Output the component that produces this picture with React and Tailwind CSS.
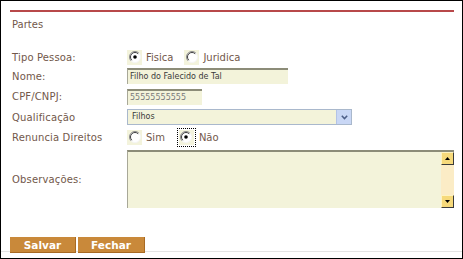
const LABEL = 'text-[#72584a]'

function Radio({ checked }) {
  return (
    <svg width="12" height="12" viewBox="0 0 12 12">
      <circle cx="6" cy="6" r="5.5" fill="#fff" />
      <path d="M2.1 9.9 A5.5 5.5 0 0 1 9.9 2.1" stroke="#8a8a8a" strokeWidth="1" fill="none" />
      <path d="M2.8 9.2 A4.5 4.5 0 0 1 9.2 2.8" stroke="#404040" strokeWidth="1" fill="none" />
      <path d="M9.9 2.1 A5.5 5.5 0 0 1 2.1 9.9" stroke="#f4f4f4" strokeWidth="1" fill="none" />
      {checked && <circle cx="6" cy="6" r="1.8" fill="#000" />}
    </svg>
  )
}

function RadioBox({ checked, focus }) {
  return (
    <div className={`w-[15px] h-[15px] flex items-center justify-center bg-[#f3f3dc] ${focus ? 'outline outline-1 outline-dotted outline-black outline-offset-1' : ''}`}>
      <Radio checked={checked} />
    </div>
  )
}

function Row({ label, h, children, extra = '' }) {
  return (
    <div className={`flex items-center ${h} ${extra}`}>
      <div className={`w-[115px] tracking-[0.15px] ${LABEL}`}>{label}</div>
      <div className="flex items-center">{children}</div>
    </div>
  )
}

function Field({ w, value, muted }) {
  return (
    <div className={`${w} h-[16px] bg-[#f3f3da] border-t-2 border-l border-t-[#8c8c78] border-l-[#a8a898] flex items-center pl-[2px] text-[8px] ${muted ? 'text-[#7a7a7a]' : 'text-[#3a3a3a]'}`}>
      {value}
    </div>
  )
}

function ScrollBtn({ up }) {
  return (
    <div className="w-[13px] h-[13px] bg-[#f6d97a] border-r border-b border-r-[#3a3a3a] border-b-[#3a3a3a] border-t border-l border-t-[#fff3c0] border-l-[#fff3c0] flex items-center justify-center">
      <svg width="5" height="3" viewBox="0 0 5 3">
        {up ? <path d="M0 3 L2.5 0 L5 3 Z" fill="#000" /> : <path d="M0 0 L2.5 3 L5 0 Z" fill="#000" />}
      </svg>
    </div>
  )
}

export default function App() {
  return (
    <div className="w-[463px] h-[259px] bg-white border border-black flex flex-col font-['DejaVu_Sans',sans-serif] text-[10px]">
      <div className="ml-[9px] mt-[9px] w-[444px] h-[2px] bg-[#b8484a]" />
      <div className={`ml-[11px] mt-[7px] h-[12px] leading-[12px] ${LABEL}`}>Partes</div>

      <div className="pl-[11px] mt-[17px] flex flex-col">
        <Row label="Tipo Pessoa:" h="h-[18px]">
          <RadioBox checked />
          <span className={`ml-[4px] ${LABEL}`}>Fisica</span>
          <div className="ml-[11px]"><RadioBox /></div>
          <span className={`ml-[4px] ${LABEL}`}>Juridica</span>
        </Row>
        <Row label="Nome:" h="h-[20px]">
          <Field w="w-[161px]" value="Filho do Falecido de Tal" />
        </Row>
        <Row label="CPF/CNPJ:" h="h-[21px]">
          <Field w="w-[75px]" value="55555555555" muted />
        </Row>
        <Row label="Qualificação" h="h-[20px]">
          <div className="w-[225px] h-[16px] bg-[#f3f3da] border border-[#a9b8cc] flex items-center text-[8px] text-[#3a3a3a]">
            <span className="flex-1 pl-[4px]">Filhos</span>
            <div className="w-[15px] h-[14px] bg-[#c9d7f5] border-l border-[#b3c3e6] flex items-center justify-center">
              <svg width="7" height="5" viewBox="0 0 7 5">
                <path d="M0.8 0.8 L3.5 3.6 L6.2 0.8" stroke="#4c5e86" strokeWidth="1.5" fill="none" />
              </svg>
            </div>
          </div>
        </Row>
        <Row label="Renuncia Direitos" h="h-[20px]">
          <RadioBox />
          <span className={`ml-[4px] ${LABEL}`}>Sim</span>
          <div className="ml-[14px]"><RadioBox checked focus /></div>
          <span className={`ml-[5px] ${LABEL}`}>Não</span>
        </Row>
        <Row label="Observações:" h="h-[58px]" extra="mt-[3px]">
          <div className="w-[327px] h-[58px] bg-[#f3f3da] border-t-2 border-l border-t-[#8c8c78] border-l-[#a8a898] flex justify-end">
            <div className="w-[13px] h-full bg-[#fbecc6] flex flex-col justify-between">
              <ScrollBtn up />
              <ScrollBtn />
            </div>
          </div>
        </Row>
      </div>

      <div className="ml-[9px] mt-[29px] flex gap-[2px] relative z-10">
        <button className="w-[66px] h-[16px] bg-[#c9893a] text-white font-bold text-[10.5px] leading-[16px] border-r border-b border-[#a86a24]">Salvar</button>
        <button className="w-[67px] h-[16px] bg-[#c9893a] text-white font-bold text-[10.5px] leading-[16px] border-r border-b border-[#a86a24]">Fechar</button>
      </div>
      <div className="mt-[-2px] h-px bg-[#e4e4e4]" />
    </div>
  )
}
